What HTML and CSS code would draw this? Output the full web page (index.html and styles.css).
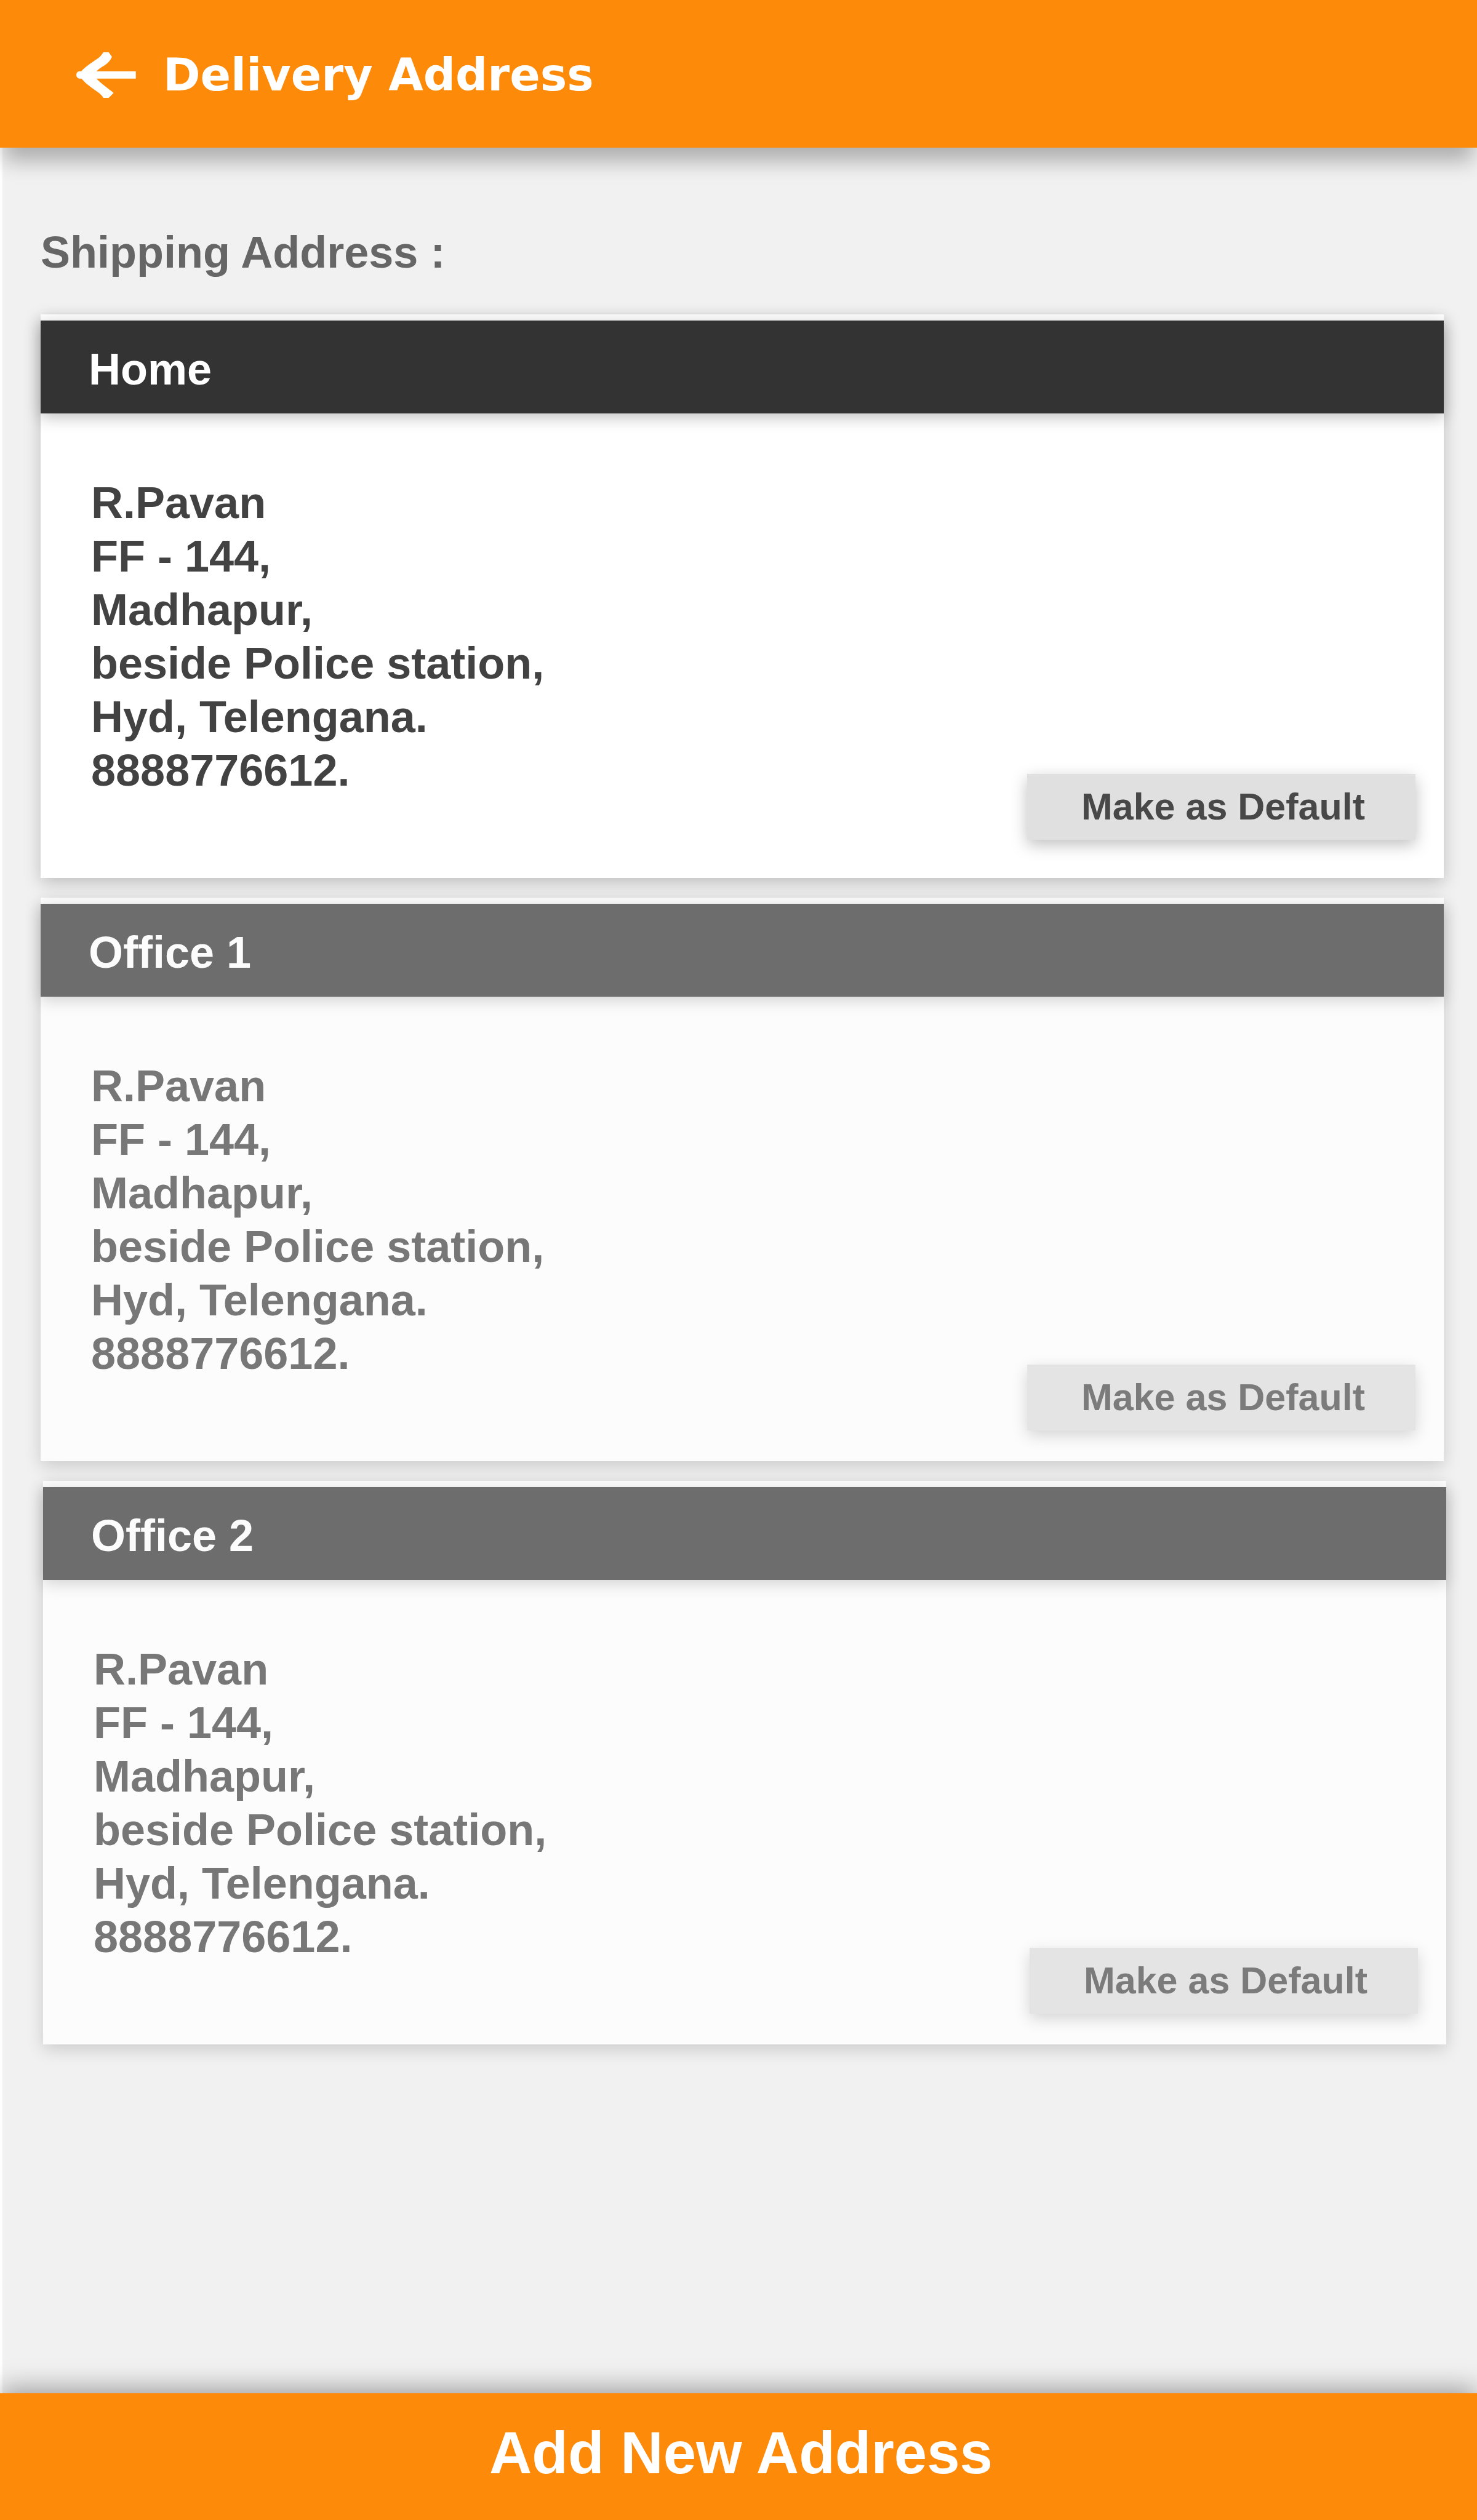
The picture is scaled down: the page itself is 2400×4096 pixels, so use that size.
FILE: index.html
```html
<!DOCTYPE html>
<html lang="en">
<head>
  <meta charset="utf-8">
  <meta name="viewport" content="width=device-width, initial-scale=1">
  <title>Delivery Address</title>
  <link rel="stylesheet" href="styles.css">
</head>
<body>
  <header class="topbar">
    <button class="back" type="button" aria-label="Back">
      <svg class="back-icon" viewBox="57 84 302 230" aria-hidden="true">
        <path fill="#fff" d="M57 199Q57 182 72 180L82 180C101 158 132 138 160 119Q180 107 194 84L221 84L237 106C230 128 208 146 188 157Q170 168 159 180L358 180L358 217L159 217C182 242 216 265 246 289L221 314L194 314C180 291 152 277 130 260Q102 240 83 217L72 217Q58 214 57 199Z"/>
      </svg>
    </button>
    <h1 class="topbar-title">Delivery Address</h1>
  </header>

  <main class="content">
    <h2 class="section-title">Shipping Address :</h2>
    <div class="cards">
      <section class="card card-default">
        <h3 class="card-title">Home</h3>
        <div class="card-body">
          <address class="address">R.Pavan<br>FF - 144,<br>Madhapur,<br>beside Police station,<br>Hyd, Telengana.<br>8888776612.</address>
          <button class="make-default" type="button">Make as Default</button>
        </div>
      </section>
      <section class="card">
        <h3 class="card-title">Office 1</h3>
        <div class="card-body">
          <address class="address">R.Pavan<br>FF - 144,<br>Madhapur,<br>beside Police station,<br>Hyd, Telengana.<br>8888776612.</address>
          <button class="make-default" type="button">Make as Default</button>
        </div>
      </section>
      <section class="card card-shifted">
        <h3 class="card-title">Office 2</h3>
        <div class="card-body">
          <address class="address">R.Pavan<br>FF - 144,<br>Madhapur,<br>beside Police station,<br>Hyd, Telengana.<br>8888776612.</address>
          <button class="make-default" type="button">Make as Default</button>
        </div>
      </section>
    </div>
  </main>

  <footer class="bottombar">
    <button class="add-address" type="button">Add New Address</button>
  </footer>
</body>
</html>
```

FILE: styles.css
```css
* {
  box-sizing: border-box;
}

body {
  margin: 0;
  min-height: 100vh;
  display: flex;
  flex-direction: column;
  background: #f1f1f1;
  font-family: "Liberation Sans", Arial, sans-serif;
  font-weight: bold;
  font-variant-ligatures: none;
}

h1,
h2,
h3 {
  margin: 0;
}

button {
  border: 0;
  font: inherit;
  cursor: pointer;
}

/* Top bar */
.topbar {
  position: relative;
  z-index: 1;
  display: flex;
  align-items: center;
  gap: 44px;
  height: 240px;
  padding: 4px 124px 0;
  background: #fe8a09;
  box-shadow: 0 28px 32px -6px rgba(0, 0, 0, 0.28);
}

.back {
  display: flex;
  padding: 0;
  background: none;
}

.back-icon {
  width: 97px;
  height: 74px;
}

.topbar-title {
  font-family: "DejaVu Sans", Verdana, sans-serif;
  font-size: 73px;
  line-height: 88px;
  color: #fff;
}

/* Address list */
.content {
  flex: 1;
  padding: 127px 54px 64px 62px;
  border-left: 4px solid #fff;
}

.section-title {
  margin-bottom: 57px;
  font-size: 72px;
  line-height: 87px;
  color: #666;
}

.cards {
  display: flex;
  flex-direction: column;
  gap: 32px;
}

.card {
  padding-top: 10px;
  background: #fcfcfc;
  box-shadow: 0 8px 26px rgba(0, 0, 0, 0.16);
}

.card-shifted {
  margin: 0 -4px 0 4px;
}

.card-title {
  padding: 36px 78px 28px;
  background: #6d6d6d;
  box-shadow: 0 6px 24px rgba(0, 0, 0, 0.17);
  font-size: 72px;
  line-height: 87px;
  color: #fcfcfc;
}

.card-body {
  display: flex;
  justify-content: space-between;
  align-items: flex-end;
  padding: 102px 46px 50px 82px;
}

.address {
  margin-bottom: 81px;
  font-size: 72px;
  font-style: normal;
  line-height: 87px;
  color: #777;
}

.make-default {
  padding: 17px 82px 18px 88px;
  background: #e4e4e4;
  box-shadow: 0 8px 24px rgba(0, 0, 0, 0.16);
  font-size: 61px;
  line-height: 72px;
  color: #7b7b7b;
}

.card-default {
  background: #fff;
  box-shadow: 0 8px 26px rgba(0, 0, 0, 0.21);
}

.card-default .card-title {
  background: #333;
  box-shadow: 0 6px 24px rgba(0, 0, 0, 0.25);
  color: #fff;
}

.card-default .address {
  color: #424242;
}

.card-default .make-default {
  margin-bottom: 12px;
  background: #e0e0e0;
  box-shadow: 0 8px 24px rgba(0, 0, 0, 0.25);
  color: #484848;
}

/* Bottom bar */
.bottombar {
  box-shadow: 0 -8px 40px rgba(0, 0, 0, 0.35);
}

.add-address {
  display: block;
  width: 100%;
  padding: 42px 0 54px 8px;
  background: #fe8a09;
  font-size: 96px;
  line-height: 110px;
  color: #fff;
}
```
